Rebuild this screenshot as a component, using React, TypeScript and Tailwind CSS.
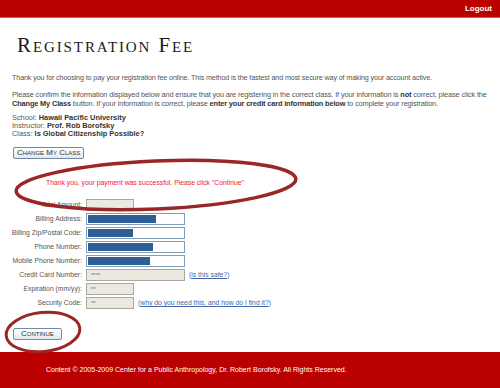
const fields = [
  { label: "Total Amount:", kind: "grey", width: "w-[48px]", value: "" },
  { label: "Billing Address:", kind: "filled", width: "w-[99px]", fill: 68 },
  { label: "Billing Zip/Postal Code:", kind: "filled", width: "w-[99px]", fill: 45 },
  { label: "Phone Number:", kind: "filled", width: "w-[99px]", fill: 65 },
  { label: "Mobile Phone Number:", kind: "filled", width: "w-[99px]", fill: 62 },
  { label: "Credit Card Number:", kind: "grey", width: "w-[99px]", value: "****", link: "(is this safe?)" },
  { label: "Expiration (mm/yy):", kind: "grey", width: "w-[48px]", value: "**" },
  {
    label: "Security Code:",
    kind: "grey",
    width: "w-[48px]",
    value: "**",
    link: "(why do you need this, and how do I find it?)",
  },
];

function Btn({ children, wide }: { children: React.ReactNode; wide?: boolean }) {
  return (
    <button
      className={`h-[12px] ${
        wide ? "px-[7px]" : "px-[3px]"
      } border border-[#6f8aa6] rounded-[2px] bg-gradient-to-b from-[#ffffff] to-[#e4e8ee] text-[#333] text-[8px] leading-[10px] [font-variant:small-caps] font-['Liberation_Sans',sans-serif]`}
    >
      {children}
    </button>
  );
}

export default function App() {
  return (
    <div className="relative w-[500px] h-[388px] bg-white overflow-hidden font-['Liberation_Sans',Arial,sans-serif] text-[#555]">
      <header className="h-[18px] bg-[#bb0000] border-b border-[#d85a5a] flex items-center justify-end pr-[8px]">
        <span className="text-white font-bold text-[8px]">Logout</span>
      </header>

      <h1 className="mt-[15px] ml-[17px] h-[24px] leading-[24px] text-[21px] text-[#1a1a1a] tracking-[1.9px] [font-variant:small-caps] font-['Liberation_Serif',serif]">
        Registration Fee
      </h1>

      <div className="px-[12px] text-[7.4px] leading-[9px]">
        <p className="mt-[16px] whitespace-nowrap text-[7.2px] tracking-[-0.13px]">
          Thank you for choosing to pay your registration fee online. This method is the fastest and most secure way of
          making your account active.
        </p>
        <p className="mt-[8px] whitespace-nowrap tracking-[-0.15px]">
          Please confirm the information displayed below and ensure that you are registering in the correct class. If
          your information is <b className="text-[#333]">not</b> correct, please click the
          <br />
          <b className="text-[#333]">Change My Class</b> button. If your information is correct, please{" "}
          <b className="text-[#333]">enter your credit card information below</b> to complete your registration.
        </p>
        <div className="mt-[6px] leading-[8px]">
          <div>
            School: <b className="text-[#333]">Hawaii Pacific University</b>
          </div>
          <div>
            Instructor: <b className="text-[#333]">Prof. Rob Borofsky</b>
          </div>
          <div>
            Class: <b className="text-[#333]">Is Global Citizenship Possible?</b>
          </div>
        </div>
        <div className="mt-[9px] pl-[1px] flex">
          <Btn>Change My Class</Btn>
        </div>
      </div>

      <p className="mt-[19px] w-[290px] text-center text-[6.8px] text-[#ee1a3c]">
        Thank you, your payment was successful. Please click "Continue"
      </p>

      <div className="mt-[11px] flex flex-col gap-[2px] text-[6.8px]">
        {fields.map((f) => (
          <div key={f.label} className="flex items-center h-[12px]">
            <span className="w-[83px] text-right pr-[1px] whitespace-nowrap">{f.label}</span>
            <div
              className={`ml-[3px] h-[12px] ${f.width} border ${
                f.kind === "grey" ? "border-[#a9a9a0] bg-[#ece9e0]" : "border-[#7f9db9] bg-white"
              } p-[1px] flex items-center`}
            >
              {f.kind === "filled" ? (
                <div className="h-full bg-[#2e5e96]" style={{ width: f.fill }} />
              ) : (
                <span className="pl-[3px] text-[6px] text-[#777] leading-none">{f.value}</span>
              )}
            </div>
            {f.link && (
              <span className="ml-[4px] text-[#4466b0] whitespace-nowrap">
                (<span className="underline">{f.link.slice(1, -1)}</span>)
              </span>
            )}
          </div>
        ))}
      </div>

      <div className="mt-[19px] ml-[13px] flex">
        <Btn wide>Continue</Btn>
      </div>

      <footer className="absolute left-0 right-0 bottom-0 h-[36px] bg-[#bb0000] flex items-center pl-[46px] text-white text-[7px]">
        Content © 2005-2009 Center for a Public Anthropology, Dr. Robert Borofsky. All Rights Reserved.
      </footer>

      <svg className="absolute left-0 top-0 pointer-events-none" width="500" height="388" viewBox="0 0 500 388">
        <ellipse
          cx="156"
          cy="185"
          rx="140"
          ry="24"
          transform="rotate(-2.5 156 185)"
          fill="none"
          stroke="#9b2626"
          strokeWidth="3.5"
        />
        <ellipse
          cx="43"
          cy="332"
          rx="37"
          ry="19.5"
          transform="rotate(-6 43 332)"
          fill="none"
          stroke="#9b2626"
          strokeWidth="3"
        />
      </svg>
    </div>
  );
}
